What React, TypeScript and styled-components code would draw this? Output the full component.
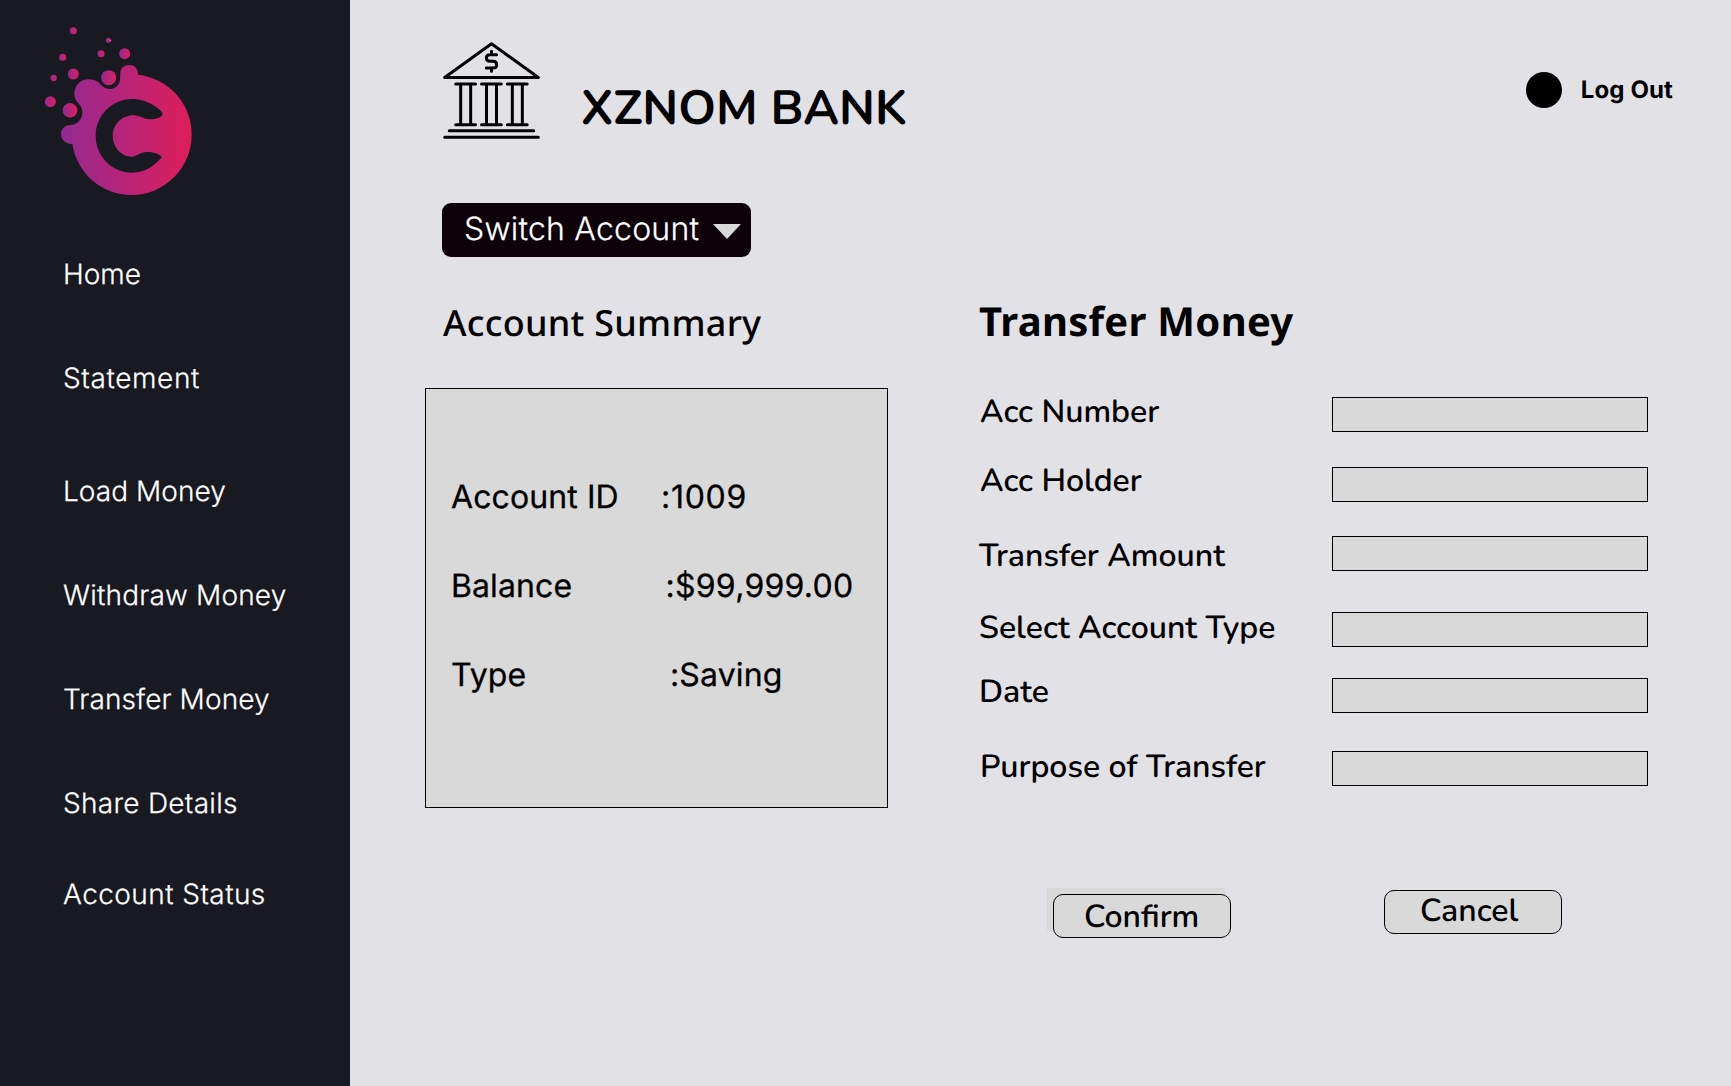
import React from "react";
import styled, { createGlobalStyle } from "styled-components";

const INTER = `Inter, "Liberation Sans", sans-serif`;
const NOTO = `"Noto Sans", "Open Sans", sans-serif`;
const ROUNDED = `Nunito, Lato, "Open Sans", sans-serif`;

const GlobalStyle = createGlobalStyle`
  *, *::before, *::after { box-sizing: border-box; }
  body {
    margin: 0;
    background: #e2e1e6;
    color: #000;
    font-family: ${INTER};
    text-rendering: geometricPrecision;
  }
  h1, h2, p, dl, dt, dd, ul { margin: 0; padding: 0; font-weight: inherit; }
`;

const Page = styled.div`
  display: grid;
  grid-template-columns: 350px 1fr;
  width: 1731px;
  height: 1086px;
  overflow: hidden;
`;

const Sidebar = styled.aside`
  background: #191921;
  padding: 10px 30px 0;
`;

const LogoArt = styled.svg`
  display: block;
  width: 180px;
  height: 200px;
`;

const NavList = styled.ul`
  list-style: none;
  padding: 47px 0 0 33px;
`;

const NavItem = styled.li<{ $gap: number; $track: number }>`
  margin-bottom: ${(p) => p.$gap}px;
  color: #fff;
  font-size: 28px;
  font-weight: 300;
  line-height: 34px;
  letter-spacing: ${(p) => p.$track}px;
  white-space: nowrap;
  -webkit-text-stroke: 0.25px currentColor;
`;

const Main = styled.main`
  padding: 40px 58px 0 75px;
`;

const Header = styled.header`
  display: flex;
  align-items: flex-start;
  height: 163px;
  padding-left: 15px;
`;

const BankArt = styled.svg`
  flex: none;
  width: 102px;
  height: 102px;
`;

const BankName = styled.h1`
  margin: 39px auto 0 39px;
  font-family: ${ROUNDED};
  font-size: 48px;
  font-weight: 700;
  line-height: 58px;
  white-space: nowrap;
`;

const LogOut = styled.div`
  display: flex;
  align-items: center;
  gap: 19px;
  margin-top: 32px;
  font-size: 24px;
  font-weight: 700;
  line-height: 36px;
  letter-spacing: 0.13px;
  white-space: nowrap;
`;

const Avatar = styled.span`
  width: 36px;
  height: 36px;
  border-radius: 50%;
  background: #000;
`;

const Switcher = styled.div`
  display: flex;
  align-items: center;
  justify-content: space-between;
  width: 309px;
  height: 54px;
  margin-left: 17px;
  padding: 0 10.5px 3px 22px;
  border-radius: 9px;
  background: #0d0009;
  color: #fff;
  font-size: 32px;
  font-weight: 300;
  line-height: 39px;
  letter-spacing: 0.22px;
  white-space: nowrap;
  -webkit-text-stroke: 0.25px currentColor;
`;

const Caret = styled.span`
  margin-top: 5px;
  border: 14px solid transparent;
  border-top: 15px solid #d9d9d9;
  border-bottom: 0;
`;

const Columns = styled.div`
  display: grid;
  grid-template-columns: 463px 669px;
  column-gap: 91px;
`;

const Title = styled.h2<{ $size: number; $weight: number; $indent: number; $line: number }>`
  height: 54px;
  margin: 39px 0 38px ${(p) => p.$indent}px;
  font-family: ${NOTO};
  font-size: ${(p) => p.$size}px;
  font-weight: ${(p) => p.$weight};
  line-height: ${(p) => p.$line}px;
  letter-spacing: 0.007em;
  white-space: nowrap;
`;

const SummaryCard = styled.dl`
  display: flex;
  flex-direction: column;
  gap: 50px;
  height: 420px;
  padding: 88px 25px;
  border: 1px solid #000;
  background: #d9d9d9;
  font-size: 32px;
  line-height: 39px;
  font-weight: 400;
  -webkit-text-stroke: 0.3px currentColor;
`;

const SummaryRow = styled.div`
  display: flex;
  white-space: nowrap;
`;

const SummaryTerm = styled.dt<{ $width: number }>`
  width: ${(p) => p.$width}px;
  letter-spacing: 0.1px;
`;

const SummaryValue = styled.dd<{ $track: number }>`
  letter-spacing: ${(p) => p.$track}px;
`;

const Form = styled.form`
  padding-top: 9px;
`;

const Field = styled.label<{ $gap: number }>`
  display: flex;
  justify-content: space-between;
  height: 35px;
  margin-bottom: ${(p) => p.$gap}px;
`;

const FieldName = styled.span<{ $shift: number; $indent: number }>`
  margin: ${(p) => p.$shift}px 0 0 ${(p) => p.$indent}px;
  font-family: ${ROUNDED};
  font-size: 32px;
  font-weight: 600;
  line-height: 40px;
  white-space: nowrap;
`;

const Entry = styled.input`
  width: 316px;
  height: 35px;
  margin: 0;
  padding: 0 8px;
  border: 1px solid #000;
  border-radius: 0;
  background: #d9d9d9;
  font: 20px ${INTER};
`;

const Actions = styled.div`
  display: flex;
  align-items: flex-start;
  gap: 153px;
  padding: 102px 0 0 68px;
`;

const ConfirmGroup = styled.div`
  width: 178px;
  height: 44px;
  background: #d9d9d9;
`;

const ActionButton = styled.button<{ $inset: number; $lift?: number; $drop?: number }>`
  display: block;
  width: 178px;
  height: 44px;
  padding: ${(p) => p.$drop ?? 0}px 0 ${(p) => p.$lift ?? 0}px ${(p) => p.$inset}px;
  border: 1px solid #000;
  border-radius: 10px;
  background: #d9d9d9;
  color: #000;
  font-family: ${ROUNDED};
  font-size: 32px;
  font-weight: 600;
  line-height: 40px;
  text-align: left;
  text-rendering: inherit;
`;

const ConfirmButton = styled(ActionButton)`
  transform: translate(6px, 6px);
`;

const CancelButton = styled(ActionButton)`
  margin: 2px 0 0 6px;
`;

const nav = [
  { label: "Home", gap: 70, track: 0 },
  { label: "Statement", gap: 79, track: 0.61 },
  { label: "Load Money", gap: 70, track: 0.05 },
  { label: "Withdraw Money", gap: 70, track: 0.18 },
  { label: "Transfer Money", gap: 70, track: 0.1 },
  { label: "Share Details", gap: 57, track: 0.28 },
  { label: "Account Status", gap: 0, track: 0.43 },
];

const summary = [
  { term: "Account ID", value: ":1009", width: 210, track: 0.7 },
  { term: "Balance", value: ":$99,999.00", width: 214.5, track: 0.25 },
  { term: "Type", value: ":Saving", width: 219, track: 0.15 },
];

const fields = [
  { name: "Acc Number", shift: -4, gap: 35, indent: 1 },
  { name: "Acc Holder", shift: -5, gap: 34, indent: 1 },
  { name: "Transfer Amount", shift: 1, gap: 41, indent: 0 },
  { name: "Select Account Type", shift: -3, gap: 31, indent: 0 },
  { name: "Date", shift: -5, gap: 38, indent: 0 },
  { name: "Purpose of Transfer", shift: -3, gap: 0, indent: 1 },
];

const bubbles = [
  [130, 62, 10.5], [235, 91, 7.5], [213, 131, 10.5], [284, 131, 16.5], [98, 142, 10.5],
  [130, 192, 16.5], [71, 204, 9.5], [236, 203, 22.5], [61, 275, 16.5], [120, 301, 22],
];

const Logo = () => (
  <LogoArt viewBox="0 0 540 600" aria-hidden="true">
    <defs>
      <linearGradient id="brand">
        <stop offset="0" stopColor="#932a91" />
        <stop offset="0.5" stopColor="#b92478" />
        <stop offset="1" stopColor="#df1d5a" />
      </linearGradient>
    </defs>
    {bubbles.map(([x, y, r]) => (
      <circle key={`${x}-${y}`} cx={x} cy={y} r={r} fill="url(#brand)" />
    ))}
    <circle cx="242" cy="91" r="1.6" fill="#e6b4cf" />
    <path
      fill="url(#brand)"
      fillRule="evenodd"
      d="M323 194A181 181 0 0 1 485 374A181 181 0 0 1 304 555C215 555 141 490 127 402C107 402 93 390 93 373C93 357 105 346 121 345C142 344 157 328 157 308C157 295 153 287 144 279C137 271 133 262 133 252C133 226 152 208 176 208C192 208 202 213 211 223C219 232 228 237 238 237C256 237 270 225 270 206L271 190C271 174 283 165 298 165C313 165 323 175 324 190ZM398 311C396 300 355 267 306 267C246 267 197 317 197 378C197 439 246 488 306 488C345 488 370 470 396 442C391 432 370 425 350 426C328 427 322 440 305 440C274 440 248 411 248 378C248 345 275 316 310 316C330 316 340 328 361 328C378 328 396 322 398 311Z"
    />
  </LogoArt>
);

const BankIcon = () => (
  <BankArt
    viewBox="60 60 306 306"
    fill="none"
    stroke="#000"
    strokeWidth="9"
    strokeLinecap="round"
    strokeLinejoin="round"
    aria-hidden="true"
  >
    <path d="M74 172.500L214.500 71L355 172.500ZM74 352H355M88 332H341" />
    {[107, 184.500, 262].map((x) => (
      <path key={x} d={`M${x} 192h59.500M${x} 314h59.500M${x + 15} 192v122M${x + 45} 192v122`} />
    ))}
    <path d="M230 104H210C203 104 199 108 199 114C199 121 204 124 211 124H219C226 124 230 128 230 134C230 140 226 144 219 144H199M214.500 94V104M214.500 144V154" />
  </BankArt>
);

export default function App() {
  return (
    <>
      <GlobalStyle />
      <Page>
        <Sidebar>
          <Logo />
          <NavList>
            {nav.map((item) => (
              <NavItem key={item.label} $gap={item.gap} $track={item.track}>{item.label}</NavItem>
            ))}
          </NavList>
        </Sidebar>
        <Main>
          <Header>
            <BankIcon />
            <BankName>XZNOM BANK</BankName>
            <LogOut>
              <Avatar />
              Log Out
            </LogOut>
          </Header>
          <Switcher>
            Switch Account
            <Caret />
          </Switcher>
          <Columns>
            <section>
              <Title $size={36} $weight={500} $indent={18} $line={54}>Account Summary</Title>
              <SummaryCard>
                {summary.map((row) => (
                  <SummaryRow key={row.term}>
                    <SummaryTerm $width={row.width}>{row.term}</SummaryTerm>
                    <SummaryValue $track={row.track}>{row.value}</SummaryValue>
                  </SummaryRow>
                ))}
              </SummaryCard>
            </section>
            <section>
              <Title $size={40} $weight={700} $indent={0} $line={50}>Transfer Money</Title>
              <Form>
                {fields.map((field) => (
                  <Field key={field.name} $gap={field.gap}>
                    <FieldName $shift={field.shift} $indent={field.indent}>{field.name}</FieldName>
                    <Entry />
                  </Field>
                ))}
                <Actions>
                  <ConfirmGroup>
                    <ConfirmButton type="button" $inset={30} $drop={3}>Confirm</ConfirmButton>
                  </ConfirmGroup>
                  <CancelButton type="button" $inset={35} $lift={1}>Cancel</CancelButton>
                </Actions>
              </Form>
            </section>
          </Columns>
        </Main>
      </Page>
    </>
  );
}
